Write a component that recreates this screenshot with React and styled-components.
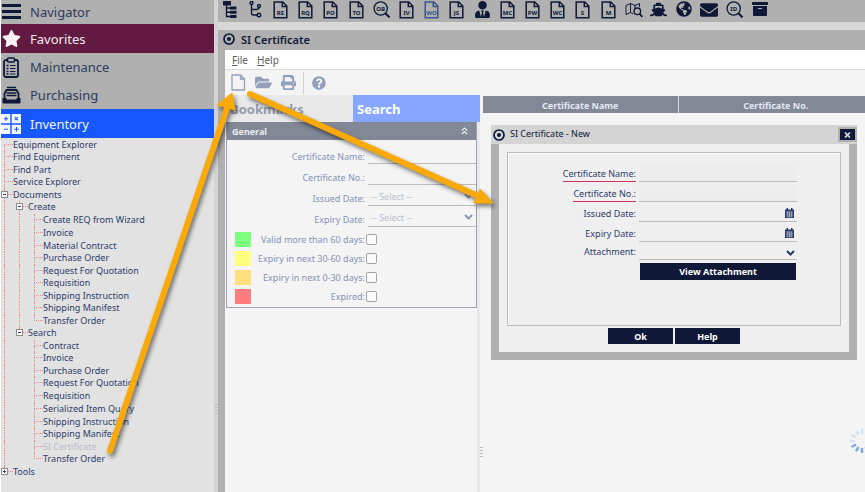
import React from "react";
import styled, { createGlobalStyle, css } from "styled-components";
import {
  FaStar,
  FaShip,
  FaGlobeAmericas,
  FaEnvelope,
  FaArchive,
  FaUserTie,
  FaQuestionCircle,
  FaFolderOpen,
  FaPrint,
} from "react-icons/fa";

const c = {
  navy: "#0f1836",
  ink: "#2c3c6a",
  faded: "#8593b6",
  bar: "#b0b0b0",
  trim: "#d4d4d4",
  pane: "#f4f4f4",
  head: "#838896",
  line: "#bcbcbc",
};

const GlobalStyle = createGlobalStyle`
  *, *::before, *::after { box-sizing: border-box; }
  body { margin: 0; background: ${c.trim}; }
  body, button, input, select {
    font-family: "Noto Sans", "Open Sans", sans-serif;
    font-size: 9px;
    color: ${c.ink};
  }
  button { border: 0; padding: 0; background: none; cursor: pointer; }
  ul { list-style: none; margin: 0; padding: 0; }
  h1, h2 { margin: 0; font-weight: 400; }
  svg { display: block; flex: none; }
`;

const Page = styled.div`
  position: relative;
  display: grid;
  grid-template-columns: 214px 4px minmax(0, 1fr);
  min-height: 100vh;
  overflow: hidden;
`;

/* ---------- sidebar ---------- */

const Sidebar = styled.aside`
  background: #e2e2e2;
  border-left: 1px solid #fff;
`;

const NavList = styled.nav`
  display: flex;
  flex-direction: column;
  background: ${c.bar};
`;

const navTones = {
  plain: css`background: ${c.bar}; color: #2d3b5e;`,
  wine: css`background: #621a40; color: #f4e8ee;`,
  blue: css`background: #1657ff; color: #f0f4ff;`,
};

const NavButton = styled.button`
  display: flex;
  align-items: center;
  gap: 9px;
  height: ${(p) => (p.$short ? 24 : p.$tone === "plain" ? 28 : 29)}px;
  font-size: 13px;
  text-align: left;
  ${(p) => navTones[p.$tone]}
`;

const NavIcon = styled.span`
  display: flex;
  justify-content: center;
  width: 20px;
  color: ${(p) => (p.$light ? "#f6f2f6" : c.navy)};
`;

const Tree = styled.ul`
  padding: 1px 0 0 3px;
`;

const TreeRow = styled.li`
  display: flex;
  height: 13px;
  &:nth-child(odd):not(:nth-child(7n)) { height: 12px; }
`;

const dash = "1px dotted #f08a8a";

const Guide = styled.span`
  width: 15px;
  border-left: ${(p) => (p.$on ? dash : "1px solid transparent")};
`;

const Joint = styled.span`
  position: relative;
  display: flex;
  flex-direction: column;
  width: 9px;
  &::before {
    content: "";
    height: 6px;
    border-left: ${(p) => (p.$first ? "1px solid transparent" : dash)};
    border-bottom: ${dash};
  }
  &::after {
    content: "";
    flex: 1;
    border-left: ${(p) => (p.$last ? "1px solid transparent" : dash)};
  }
`;

const Expander = styled.button`
  position: absolute;
  z-index: 1;
  left: -3px;
  top: 2px;
  width: 7px;
  height: 7px;
  border: 1px solid #8c8c8c;
  background: #fff;
`;

const TreeLink = styled.a`
  line-height: 12px;
  white-space: nowrap;
  text-decoration: none;
  color: ${(p) => (p.$dim ? "#b9bccb" : c.ink)};
`;

const Splitter = styled.div`
  display: flex;
  flex-direction: column;
  align-items: center;
  padding-top: ${(p) => p.$top}px;
  background: ${(p) => p.$fill};
`;

const Grip = styled.span`
  width: 3px;
  height: 12px;
  background: repeating-linear-gradient(#bdbdbd 0 1px, transparent 1px 3px);
`;

/* ---------- main area ---------- */

const Main = styled.main`
  display: flex;
  flex-direction: column;
  gap: 8px;
  min-width: 0;
  background: #d8d8d8;
`;

const IconBar = styled.div`
  display: flex;
  height: 22px;
  background: ${c.bar};
`;

const IconButton = styled.button`
  display: flex;
  justify-content: center;
  align-items: flex-start;
  width: 25px;
  padding-top: 1px;
  color: ${(p) => (p.$blue ? "#3b5488" : c.navy)};
  &:nth-child(5n) { margin-right: 1px; }
`;

const Window = styled.section`
  flex: 1;
  display: flex;
  flex-direction: column;
  border-left: 7px solid ${c.bar};
  background: ${c.pane};
`;

const TitleBar = styled.header`
  display: flex;
  align-items: center;
  gap: 6px;
  height: 20px;
  padding-bottom: 2px;
  margin-left: -2px;
  background: ${c.bar};
  color: ${c.navy};
`;

const WindowTitle = styled.h1`
  font-size: 11px;
  font-weight: 600;
`;

const MenuBar = styled.div`
  display: flex;
  align-items: center;
  gap: 9px;
  height: 20px;
  padding-left: 7px;
  background: #fff;
  border-bottom: 1px solid #dedede;
`;

const MenuButton = styled.button`
  font-size: 10px;
  color: #5c5c60;
  &::first-letter { text-decoration: underline; }
`;

const ToolBar = styled.div`
  display: flex;
  align-items: center;
  height: 25px;
  padding-left: 1px;
  color: #94a0b9;
`;

const ToolButton = styled.button`
  display: flex;
  justify-content: center;
  width: 25px;
  color: inherit;
`;

const Divider = styled.span`
  width: 1px;
  height: 22px;
  margin: 0 2px;
  background: #cfcfcf;
`;

const Panes = styled.div`
  flex: 1;
  display: grid;
  grid-template-columns: 255px 3px minmax(0, 1fr);
`;

const SearchPane = styled.div`
  padding-left: 1px;
  background: linear-gradient(to left, #e9e9e9 3px, ${c.pane} 3px);
`;

const Tabs = styled.div`
  display: grid;
  grid-template-columns: 1fr 1fr;
`;

const Tab = styled.button`
  height: 27px;
  padding: 0 0 0 4px;
  text-align: left;
  font-size: 13px;
  font-weight: 700;
  background: ${(p) => (p.$active ? "#87a6ff" : "#e9e9e9")};
  color: ${(p) => (p.$active ? "#fff" : "#949cae")};
`;

const Card = styled.section`
  margin-right: 3px;
  border: 1px solid #9d9fb0;
  border-top: 0;
`;

const CardHead = styled.header`
  display: flex;
  align-items: center;
  justify-content: space-between;
  height: 18px;
  padding: 0 8px 0 5px;
  background: ${c.head};
  color: #e8ebf2;
`;

const CardTitle = styled.h2`
  font-size: 9px;
  font-weight: 700;
`;

const CollapseButton = styled.button`
  color: inherit;
`;

const SearchForm = styled.form`
  padding: 3px 0 3px;
`;

const Field = styled.div`
  display: grid;
  grid-template-columns: 138px minmax(0, 1fr);
  align-items: end;
  column-gap: 3px;
  height: 21px;
`;

const FadedLabel = styled.label`
  text-align: right;
  white-space: nowrap;
  line-height: 15px;
  color: ${c.faded};
`;

const Control = styled.div`
  position: relative;
  display: flex;
  align-items: center;
  border-bottom: 1px solid ${c.line};
  color: ${(p) => (p.$faded ? "#8a98b8" : "#263a6c")};
`;

const TextInput = styled.input`
  width: 100%;
  min-width: 0;
  height: ${(p) => (p.$tall ? 18 : 16)}px;
  padding: 0 3px;
  border: 0;
  outline: 0;
  background: ${(p) => (p.$fill ? "#ededed" : "transparent")};
`;

const Select = styled.select`
  appearance: none;
  width: 100%;
  height: ${(p) => (p.$short ? 13 : 18)}px;
  padding: 0 3px;
  border: 0;
  outline: 0;
  background: transparent;
  color: #b9becf;
`;

const Adornment = styled.span`
  position: absolute;
  right: ${(p) => (p.$inset ? 3 : 2)}px;
  top: 50%;
  transform: translateY(-50%);
  pointer-events: none;
`;

const StatusList = styled.div`
  display: grid;
  gap: 4px;
  padding: 5px 0 0 8px;
`;

const StatusRow = styled.div`
  display: grid;
  grid-template-columns: 16px 114px 12px;
  align-items: center;
  height: 15px;
`;

const Swatch = styled.span`
  height: 15px;
  background: ${(p) => p.$color};
`;

const Check = styled.input`
  appearance: none;
  width: 11px;
  height: 11px;
  margin: 0 0 0 1px;
  border: 1px solid #a4a4a4;
  border-radius: 2px;
  background: #fbfbfb;
`;

/* ---------- results and dialog ---------- */

const Results = styled.div`
  position: relative;
  padding-top: 1px;
  overflow: hidden;
`;

const Table = styled.table`
  width: 390px;
  min-width: 100%;
  border-collapse: collapse;
  table-layout: fixed;
`;

const Th = styled.th`
  height: 17px;
  padding: 1px 0 0;
  font-weight: 700;
  background: ${c.head};
  color: #e3e8f4;
  & + & { border-left: 1px solid #d8dae0; }
`;

const Dialog = styled.section`
  position: absolute;
  left: 8px;
  top: 30px;
  width: 366px;
  border: 8px solid ${c.bar};
  border-top: 0;
  background: #efefef;
`;

const DialogBar = styled.header`
  display: flex;
  align-items: center;
  gap: 5px;
  height: 19px;
  margin: 0 -8px;
  padding-left: 2px;
  background: ${c.trim};
  color: ${c.navy};
`;

const DialogTitle = styled.h2`
  flex: 1;
  padding-bottom: 2px;
  font-size: 9px;
`;

const CloseButton = styled.button`
  display: flex;
  align-items: center;
  justify-content: center;
  width: 19px;
  height: 15px;
  border: 2px solid ${c.bar};
  background: ${c.navy};
`;

const DialogForm = styled.form`
  padding: 8px;
`;

const Fieldset = styled.div`
  min-height: 174px;
  padding: 9px 43px 0 0;
  border: 1px solid ${c.line};
  box-shadow: inset 1px 1px 0 #fff;
`;

const DialogField = styled.div`
  display: grid;
  grid-template-columns: 128px minmax(0, 1fr);
  align-items: end;
  column-gap: 3px;
  padding-top: ${(p) => p.$gap}px;
`;

const DialogLabel = styled.label`
  justify-self: end;
  line-height: 15px;
  white-space: nowrap;
  border-bottom: 1px solid ${(p) => (p.$required ? "#d2325f" : "transparent")};
`;

const NavyButton = styled.button`
  height: ${(p) => (p.$wide ? 17 : 16)}px;
  width: ${(p) => (p.$wide ? "100%" : "65px")};
  background: ${c.navy};
  color: #fff;
  font-weight: 700;
`;

const AttachmentSlot = styled.div`
  padding: 3px 1px 0 132px;
`;

const Actions = styled.div`
  display: flex;
  justify-content: center;
  gap: 2px;
  padding-top: 2px;
`;

const SpinnerBox = styled.div`
  position: absolute;
  right: -10px;
  top: 333px;
`;

const Arrows = styled.svg`
  position: absolute;
  left: 0;
  top: 0;
  pointer-events: none;
  filter: drop-shadow(2px 3px 2px rgba(0, 0, 0, 0.5));
`;

/* ---------- drawings ---------- */

const DocIcon = ({ code }) => (
  <svg width="18" height="18" viewBox="0 0 18 18" fill="none" stroke="currentColor" strokeWidth="1.5">
    <path d="M2.2 1h8.6l4 4v11.8H2.2z" />
    <path d="M10.3 1v4.5h4.5" />
    <text x="8.5" y="13.7" fontSize="6" fontWeight="700" textAnchor="middle" fill="currentColor" stroke="none">{code}</text>
  </svg>
);

const LensIcon = ({ code }) => (
  <svg width="18" height="18" viewBox="0 0 18 18" fill="none" stroke="currentColor">
    <circle cx="7.7" cy="7.5" r="6.6" strokeWidth="1.3" />
    <path d="M12.5 12.3l4 4.2" strokeWidth="2" />
    <text x="7.7" y="9.6" fontSize="6" fontWeight="700" textAnchor="middle" fill="currentColor" stroke="none">{code}</text>
  </svg>
);

const HierarchyIcon = () => (
  <svg width="18" height="18" viewBox="0 0 18 18" fill="currentColor">
    <rect x="1" y="0" width="8" height="4.5" rx="0.5" />
    <rect x="8" y="5.5" width="6.5" height="3" rx="0.5" />
    <rect x="8" y="9.7" width="6.5" height="3" rx="0.5" />
    <rect x="8" y="14" width="6.5" height="3" rx="0.5" />
    <path d="M4.5 3v12.5H8M4.5 7H8M4.5 11.2H8" fill="none" stroke="currentColor" strokeWidth="1.4" />
  </svg>
);

const BranchIcon = () => (
  <svg width="18" height="18" viewBox="0 0 18 18" fill="none" stroke="currentColor" strokeWidth="1.4">
    <circle cx="4.5" cy="2" r="1.5" />
    <circle cx="12" cy="5" r="1.5" />
    <circle cx="12" cy="14" r="1.8" />
    <path d="M4.5 3.5v8.5q0 2 2 2H10M4.500 8.500H9q3 0 3-2" />
  </svg>
);

const MapSearchIcon = () => (
  <svg width="18" height="18" viewBox="0 0 18 18" fill="none" stroke="currentColor" strokeWidth="1">
    <path d="M8 13l-2.5-1.5L1 13.5V4.5l4.5-2 4.5 2 4.5-2V6M5.5 2.5v9M10 4.5v2.5" />
    <circle cx="12.3" cy="10.3" r="3.3" strokeWidth="1.4" />
    <path d="M14.7 12.8l2.6 3" strokeWidth="1.8" />
  </svg>
);

const TargetIcon = () => (
  <svg width="12" height="12" viewBox="0 0 12 12">
    <circle cx="6" cy="6" r="5" fill="none" stroke="currentColor" strokeWidth="1.7" />
    <circle cx="6" cy="6" r="2" fill="currentColor" />
  </svg>
);

const MenuIcon = () => (
  <svg width="19" height="17" viewBox="0 0 19 17" fill="currentColor">
    <path d="M0 0h19v3H0zM0 6h19v3H0zM0 12h19v3H0z" />
  </svg>
);

const ClipboardIcon = () => (
  <svg width="16" height="21" viewBox="0 0 16 21" fill="none" stroke="currentColor">
    <rect x="1" y="3" width="14" height="17" rx="2" strokeWidth="1.8" />
    <rect x="4.5" y="1" width="7" height="4" rx="1" fill="#b0b0b0" strokeWidth="1.5" />
    <path d="M3.5 8.5h2M3.5 11.5h2M3.5 14.5h2M3.5 17h2" strokeWidth="1.5" />
    <path d="M7 8.5h5.5M7 11.5h5.5M7 14.5h5.5M7 17h5.5" />
  </svg>
);

const CashIcon = () => (
  <svg width="19" height="18" viewBox="0 0 19 18" fill="none" stroke="currentColor">
    <path d="M5 1.5h9" strokeWidth="1.5" />
    <path d="M2.5 12V7.5L4.5 4h10l2 3.5V12" strokeWidth="1.8" />
    <path d="M4.5 7h10M4.5 9.5h10" strokeWidth="1.3" />
    <path d="M0.5 12h3.5l1 1.5h9l1-1.5h3.5v4.5q0 1-1 1h-16q-1 0-1-1z" fill="currentColor" stroke="none" />
  </svg>
);

const CalcIcon = () => (
  <svg width="20" height="20" viewBox="0 0 20 20">
    <path d="M0 0h9.3v9.3H0zM10.7 0H20v9.3h-9.3zM0 10.7h9.3V20H0zM10.7 10.7H20V20h-9.3z" fill="#f3f5fb" />
    <path d="M3 4.7h4M5 2.7v4M13.8 3.2l3 3M16.8 3.2l-3 3M3 15.3h4M13.3 15.3h4.4M15.5 13.1v4.4" stroke="#1657ff" strokeWidth="1.1" />
  </svg>
);

const CalendarIcon = () => (
  <svg width="9" height="10" viewBox="0 0 9 10" fill="currentColor">
    <path d="M0 1.5h9V10H0zM1.5 0h1.5v2H1.5zM6 0h1.5v2H6z" />
    <path d="M1 4h7M1 6h7M1 8h7M2.7 3.5V9.5M4.5 3.5V9.5M6.3 3.5V9.5" stroke="#e6e8ef" strokeWidth="0.5" />
  </svg>
);

const ChevronIcon = () => (
  <svg width="9" height="7" viewBox="0 0 9 7" fill="none" stroke="currentColor" strokeWidth="2">
    <path d="M1 1.5l3.5 3.5L8 1.5" />
  </svg>
);

const NewFileIcon = () => (
  <svg width="15" height="17" viewBox="0 0 15 17" fill="none" stroke="currentColor" strokeWidth="1.3">
    <path d="M1 1h8.5l4 4v11H1z" />
    <path d="M9.5 1v4h4" />
  </svg>
);

const DoubleUpIcon = () => (
  <svg width="7" height="8" viewBox="0 0 7 8" fill="none" stroke="currentColor" strokeWidth="1.2">
    <path d="M0.8 3.5l2.7-2.5 2.7 2.5M0.8 7l2.7-2.5L6.2 7" />
  </svg>
);

const ToggleMark = ({ plus }) => (
  <svg width="5" height="5" viewBox="0 0 5 5" stroke="#33436f">
    <path d={plus ? "M1 2.5h3M2.5 1v3" : "M1 2.5h3"} />
  </svg>
);

const CrossIcon = () => (
  <svg width="7" height="6" viewBox="0 0 7 6" stroke="#dcdcdc" strokeWidth="1.7">
    <path d="M1 0.5l5 5M6 0.5l-5 5" />
  </svg>
);

const Spinner = () => (
  <svg width="26" height="26" viewBox="-13 -13 26 26" strokeWidth="2.4">
    {Array.from({ length: 12 }, (_, i) => (
      <line
        key={i}
        y1="-7"
        y2="-12"
        transform={`rotate(${i * 30})`}
        stroke={i >= 5 && i <= 8 ? "#7ba5db" : "#d6e2f1"}
      />
    ))}
  </svg>
);

/* ---------- data ---------- */

const docs = (codes) => codes.map((code) => ({ label: code, icon: <DocIcon code={code} />, blue: code === "WO" }));

const shortcuts = [
  { label: "Hierarchy", icon: <HierarchyIcon /> },
  { label: "Branches", icon: <BranchIcon /> },
  ...docs(["RE", "RQ", "PO", "TO"]),
  { label: "OB search", icon: <LensIcon code="OB" /> },
  ...docs(["IV", "WO", "JS"]),
  { label: "User", icon: <FaUserTie size={17} /> },
  ...docs(["MC", "PW", "WC", "S", "M"]),
  { label: "Map search", icon: <MapSearchIcon /> },
  { label: "Shipping", icon: <FaShip size={17} /> },
  { label: "Globe", icon: <FaGlobeAmericas size={16} /> },
  { label: "Mail", icon: <FaEnvelope size={18} /> },
  { label: "ID search", icon: <LensIcon code="ID" /> },
  { label: "Archive", icon: <FaArchive size={16} /> },
];

const navItems = [
  { label: "Navigator", icon: <MenuIcon />, tone: "plain", short: true },
  { label: "Favorites", icon: <FaStar size={19} />, tone: "wine" },
  { label: "Maintenance", icon: <ClipboardIcon />, tone: "plain" },
  { label: "Purchasing", icon: <CashIcon />, tone: "plain" },
  { label: "Inventory", icon: <CalcIcon />, tone: "blue" },
];

const tree = [
  { label: "Equipment Explorer" },
  { label: "Find Equipment" },
  { label: "Find Part" },
  { label: "Service Explorer" },
  {
    label: "Documents",
    children: [
      {
        label: "Create",
        children: [
          "Create REQ from Wizard", "Invoice", "Material Contract", "Purchase Order", "Request For Quotation",
          "Requisition", "Shipping Instruction", "Shipping Manifest", "Transfer Order",
        ].map((label) => ({ label })),
      },
      {
        label: "Search",
        children: [
          "Contract", "Invoice", "Purchase Order", "Request For Quotation", "Requisition", "Serialized Item Query",
          "Shipping Instruction", "Shipping Manifest", "SI Certificate", "Transfer Order",
        ].map((label) => ({ label, dim: label === "SI Certificate" })),
      },
    ],
  },
  { label: "Tools", closed: true },
];

const flatten = (nodes, guides = []) =>
  nodes.flatMap((node, i) => {
    const last = i === nodes.length - 1;
    const row = { ...node, guides, last, first: guides.length === 0 && i === 0 };
    return [row, ...(node.children ? flatten(node.children, [...guides, !last]) : [])];
  });

const statuses = [
  { id: "over60", label: "Valid more than 60 days:", color: "#7dff7d" },
  { id: "to60", label: "Expiry in next 30-60 days:", color: "#ffff7d" },
  { id: "to30", label: "Expiry in next 0-30 days:", color: "#ffdf7d" },
  { id: "expired", label: "Expired:", color: "#ff7d7d" },
];

const dateFields = [
  { id: "issued", label: "Issued Date:" },
  { id: "expiry", label: "Expiry Date:" },
];

/* ---------- sections ---------- */

function NavigationTree() {
  return (
    <Tree>
      {flatten(tree).map((row, i) => (
        <TreeRow key={i}>
          {row.guides.map((on, g) => <Guide key={g} $on={on} />)}
          <Joint $first={row.first} $last={row.last}>
            {(row.children || row.closed) && (
              <Expander aria-label={`Toggle ${row.label}`}><ToggleMark plus={row.closed} /></Expander>
            )}
          </Joint>
          <TreeLink href="#" $dim={row.dim}>{row.label}</TreeLink>
        </TreeRow>
      ))}
    </Tree>
  );
}

function SearchCard() {
  return (
    <Card>
      <CardHead>
        <CardTitle>General</CardTitle>
        <CollapseButton aria-label="Collapse"><DoubleUpIcon /></CollapseButton>
      </CardHead>
      <SearchForm>
        <Field>
          <FadedLabel htmlFor="s-name">Certificate Name:</FadedLabel>
          <Control $faded><TextInput id="s-name" $tall /></Control>
        </Field>
        <Field>
          <FadedLabel htmlFor="s-no">Certificate No.:</FadedLabel>
          <Control $faded><TextInput id="s-no" $tall /></Control>
        </Field>
        {dateFields.map((f) => (
          <Field key={f.id}>
            <FadedLabel htmlFor={`s-${f.id}`}>{f.label}</FadedLabel>
            <Control $faded>
              <Select id={`s-${f.id}`}><option>-- Select --</option></Select>
              <Adornment $inset><ChevronIcon /></Adornment>
            </Control>
          </Field>
        ))}
        <StatusList>
          {statuses.map((s) => (
            <StatusRow key={s.id}>
              <Swatch $color={s.color} />
              <FadedLabel htmlFor={s.id}>{s.label}</FadedLabel>
              <Check type="checkbox" id={s.id} />
            </StatusRow>
          ))}
        </StatusList>
      </SearchForm>
    </Card>
  );
}

function NewCertificateDialog() {
  return (
    <Dialog role="dialog" aria-labelledby="dialog-title">
      <DialogBar>
        <TargetIcon />
        <DialogTitle id="dialog-title">SI Certificate - New</DialogTitle>
        <CloseButton aria-label="Close"><CrossIcon /></CloseButton>
      </DialogBar>
      <DialogForm>
        <Fieldset>
          <DialogField $gap={3}>
            <DialogLabel htmlFor="d-name" $required>Certificate Name:</DialogLabel>
            <Control><TextInput id="d-name" $fill /></Control>
          </DialogField>
          <DialogField $gap={3}>
            <DialogLabel htmlFor="d-no" $required>Certificate No.:</DialogLabel>
            <Control><TextInput id="d-no" $fill /></Control>
          </DialogField>
          {dateFields.map((f) => (
            <DialogField key={f.id} $gap={3}>
              <DialogLabel htmlFor={`d-${f.id}`}>{f.label}</DialogLabel>
              <Control>
                <TextInput id={`d-${f.id}`} />
                <Adornment $inset><CalendarIcon /></Adornment>
              </Control>
            </DialogField>
          ))}
          <DialogField $gap={2}>
            <DialogLabel htmlFor="d-att">Attachment:</DialogLabel>
            <Control>
              <Select id="d-att" $short />
              <Adornment><ChevronIcon /></Adornment>
            </Control>
          </DialogField>
          <AttachmentSlot><NavyButton type="button" $wide>View Attachment</NavyButton></AttachmentSlot>
        </Fieldset>
        <Actions>
          <NavyButton type="button">Ok</NavyButton>
          <NavyButton type="button">Help</NavyButton>
        </Actions>
      </DialogForm>
    </Dialog>
  );
}

export default function App() {
  return (
    <>
      <GlobalStyle />
      <Page>
        <Sidebar>
          <NavList>
            {navItems.map((n) => (
              <NavButton key={n.label} $tone={n.tone} $short={n.short}>
                <NavIcon $light={n.tone !== "plain"}>{n.icon}</NavIcon>
                {n.label}
              </NavButton>
            ))}
          </NavList>
          <NavigationTree />
        </Sidebar>
        <Splitter $top={404} $fill={c.trim}><Grip /></Splitter>
        <Main>
          <IconBar>
            {shortcuts.map((s) => (
              <IconButton key={s.label} aria-label={s.label} $blue={s.blue}>{s.icon}</IconButton>
            ))}
          </IconBar>
          <Window>
            <TitleBar>
              <TargetIcon />
              <WindowTitle>SI Certificate</WindowTitle>
            </TitleBar>
            <MenuBar>
              <MenuButton>File</MenuButton>
              <MenuButton>Help</MenuButton>
            </MenuBar>
            <ToolBar>
              <ToolButton aria-label="New"><NewFileIcon /></ToolButton>
              <ToolButton aria-label="Open"><FaFolderOpen size={17} /></ToolButton>
              <ToolButton aria-label="Print"><FaPrint size={15} /></ToolButton>
              <Divider />
              <ToolButton aria-label="Help"><FaQuestionCircle size={14} /></ToolButton>
            </ToolBar>
            <Panes>
              <SearchPane>
                <Tabs>
                  <Tab>Bookmarks</Tab>
                  <Tab $active>Search</Tab>
                </Tabs>
                <SearchCard />
              </SearchPane>
              <Splitter $top={352} $fill={c.pane}><Grip /></Splitter>
              <Results>
                <Table>
                  <thead>
                    <tr>
                      <Th>Certificate Name</Th>
                      <Th>Certificate No.</Th>
                    </tr>
                  </thead>
                </Table>
                <NewCertificateDialog />
                <SpinnerBox><Spinner /></SpinnerBox>
              </Results>
            </Panes>
          </Window>
        </Main>
        <Arrows width="520" height="470" viewBox="0 0 520 470" fill="#f9aa0a" stroke="#f9aa0a">
          <path d="M110 451L227 108M250 94L478 196" strokeWidth="6" strokeLinecap="round" />
          <path d="M232 93l3 17-18-5zM493 203l-19 0 6-14z" strokeWidth="1" />
        </Arrows>
      </Page>
    </>
  );
}
